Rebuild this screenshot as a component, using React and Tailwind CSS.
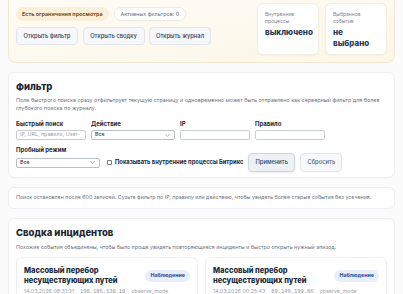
import { ChevronDown } from 'lucide-react';

function Stat({ label, value }) {
  return (
    <div className="w-[62px] h-[52px] rounded-[6px] bg-white border border-[#f4efe3] px-[7px] pt-[7px] shadow-[0_1px_2px_rgba(120,100,60,0.05)]">
      <div className="text-[5px] leading-[6.5px] text-[#7b8593]">{label}</div>
      <div className="mt-[3px] text-[8px] leading-[11px] font-extrabold text-[#1f3a5c]">{value}</div>
    </div>
  );
}

function Field({ label, width, children }) {
  return (
    <div className="flex flex-col" style={{ width }}>
      <div className="text-[6px] leading-[7px] font-bold text-[#1f2937]">{label}</div>
      <div className="mt-[3.5px]">{children}</div>
    </div>
  );
}

function Input({ placeholder }) {
  return (
    <div className="h-[10px] w-full rounded-[2px] border border-[#c9ced6] bg-white px-[3px] flex items-center overflow-hidden">
      <span className="text-[5.3px] text-[#9aa1ab] whitespace-nowrap">{placeholder}</span>
    </div>
  );
}

function Select({ value }) {
  return (
    <div className="h-[10px] w-full rounded-[2px] border border-[#b9bfc8] bg-white px-[3px] flex items-center justify-between">
      <span className="text-[5.3px] text-[#1f2937]">{value}</span>
      <ChevronDown size={7} strokeWidth={1.6} className="text-[#4b5563]" />
    </div>
  );
}

function Incident({ date, ip }) {
  return (
    <div className="rounded-[6px] border border-[#eceef2] bg-white px-[7px] pt-[8px] pb-[6px]">
      <div className="flex items-center justify-between gap-[6px]">
        <div className="text-[7.5px] leading-[10px] font-extrabold text-[#1c2a3d]">
          Массовый перебор
          <br />
          несуществующих путей
        </div>
        <span className="shrink-0 rounded-full bg-[#e8eefb] px-[5px] h-[12px] flex items-center text-[5.3px] font-bold text-[#2c4d95]">
          Наблюдение
        </span>
      </div>
      <div className="mt-[2px] flex items-center gap-[6px] text-[5.3px] leading-[7px] text-[#9aa3ae] whitespace-nowrap">
        <span>{date}</span>
        <span className="font-['DejaVu_Sans_Mono',monospace] text-[5.4px] text-[#8c95a1]">{ip}</span>
        <span>observe_mode</span>
      </div>
    </div>
  );
}

export default function App() {
  return (
    <div className="min-h-screen bg-[#fbfbfc] px-[8px] font-['Inter',sans-serif] overflow-hidden">
      <div className="-mt-[4px] rounded-b-[8px] border border-t-0 border-[#f2e8d2] bg-gradient-to-br from-[#fffcf6] to-[#fdf6e7] px-[7px] pt-[7px] pb-[7px] flex justify-between">
        <div className="pt-[4px]">
          <div className="flex gap-[5px]">
            <span className="h-[14px] px-[6px] rounded-full bg-[#fcefd9] flex items-center text-[5.4px] font-bold text-[#7d5419]">
              Есть ограничения просмотра
            </span>
            <span className="h-[14px] px-[6px] rounded-full bg-white border border-[#eceae4] flex items-center text-[5.4px] text-[#6b7280]">
              Активных фильтров: 0
            </span>
          </div>
          <div className="mt-[6px] flex gap-[4.5px]">
            {['Открыть фильтр', 'Открыть сводку', 'Открыть журнал'].map((t) => (
              <button
                key={t}
                className="h-[18px] w-[62px] rounded-[4px] border border-[#e1e5eb] bg-[#f5f7fa] text-[5.8px] font-medium text-[#374151]"
              >
                {t}
              </button>
            ))}
          </div>
        </div>
        <div className="flex gap-[6px]">
          <Stat label={<>Внутренние<br />процессы</>} value="выключено" />
          <Stat label={<>Выбранное<br />событие</>} value="не выбрано" />
        </div>
      </div>

      <div className="mt-[9px] rounded-[6px] border border-[#eceef1] bg-white px-[7px] pt-[8px] pb-[5px]">
        <div className="text-[9.5px] leading-[12px] font-extrabold text-[#1c2533]">Фильтр</div>
        <div className="mt-[3px] text-[5.4px] leading-[8px] text-[#6b7280]">
          Поле быстрого поиска сразу отфильтрует текущую страницу и одновременно может быть отправлено как серверный фильтр для более глубокого поиска по журналу.
        </div>
        <div className="mt-[7.5px] flex gap-[5px]">
          <Field label="Быстрый поиск" width="70px">
            <Input placeholder="IP, URL, правило, User-" />
          </Field>
          <Field label="Действие" width="84px">
            <Select value="Все" />
          </Field>
          <Field label="IP" width="70px">
            <Input placeholder="" />
          </Field>
          <Field label="Правило" width="70px">
            <Input placeholder="" />
          </Field>
        </div>
        <div className="mt-[7px] text-[6px] leading-[6px] font-bold text-[#1f2937]">Пробный режим</div>
        <div className="flex items-center h-[19px]">
          <div className="w-[84px]">
            <Select value="Все" />
          </div>
          <div className="ml-[7px] w-[5px] h-[5px] rounded-[1px] border border-[#6b7280] bg-white" />
          <span className="ml-[3px] text-[5.8px] font-bold text-[#1f2937] whitespace-nowrap">
            Показывать внутренние процессы Битрикс
          </span>
          <button className="ml-[5px] h-[19px] w-[47px] rounded-[4px] border border-[#cdd5df] bg-[#edf1f6] shadow-[0_1px_2px_rgba(0,0,0,0.08)] text-[5.8px] font-medium text-[#2e4a6b]">
            Применить
          </button>
          <button className="ml-[5px] h-[19px] w-[42px] rounded-[4px] border border-[#e3e7ec] bg-[#f6f8fa] text-[5.8px] font-medium text-[#52677d]">
            Сбросить
          </button>
        </div>
      </div>

      <div className="mt-[9px] h-[22px] rounded-[6px] border border-[#eceef1] bg-white px-[7px] flex items-center">
        <span className="text-[5.3px] text-[#6b7280] whitespace-nowrap">
          Поиск остановлен после 600 записей. Сузьте фильтр по IP, правилу или действию, чтобы увидеть более старые события без усечения.
        </span>
      </div>

      <div className="mt-[9px] rounded-[6px] border border-[#eceef1] bg-white px-[7px] pt-[8px] pb-[8px]">
        <div className="text-[9.5px] leading-[12px] font-extrabold text-[#1c2533]">Сводка инцидентов</div>
        <div className="mt-[4px] text-[5.3px] leading-[8px] text-[#6b7280] whitespace-nowrap">
          Похожие события объединены, чтобы было проще увидеть повторяющиеся инциденты и быстро открыть нужный эпизод.
        </div>
        <div className="mt-[6px] grid grid-cols-2 gap-[7px]">
          <Incident date="14.03.2026 08:31:31" ip="198.186.130.10" />
          <Incident date="14.03.2026 00:25:43" ip="89.149.199.86" />
        </div>
      </div>
    </div>
  );
}
